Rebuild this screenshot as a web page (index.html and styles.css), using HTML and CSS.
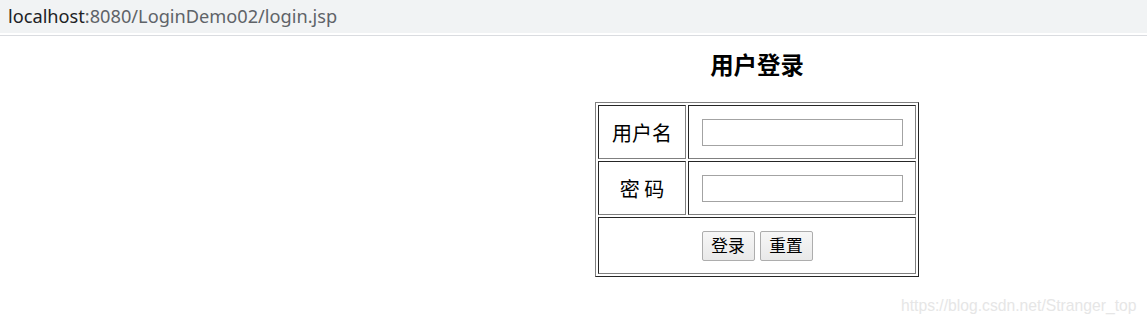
FILE: index.html
```html
<!DOCTYPE html>
<html lang="zh-CN">
<head>
<meta charset="utf-8">
<title>用户登录</title>
<link rel="stylesheet" href="styles.css">
</head>
<body>
<div class="urlbar"><span class="host">localhost</span><span class="path">:8080/LoginDemo02/login.jsp</span></div>
<div class="divider"></div>
<main class="page">
  <form class="login">
    <h3 class="title">用户登录</h3>
    <table class="login-table">
      <tr class="row">
        <td class="label">用户名</td>
        <td class="field"><input class="text-input" type="text"></td>
      </tr>
      <tr class="row">
        <td class="label">密 码</td>
        <td class="field"><input class="text-input" type="password"></td>
      </tr>
      <tr class="row-actions">
        <td class="actions" colspan="2"><button class="btn" type="button">登录</button><button class="btn" type="button">重置</button></td>
      </tr>
    </table>
  </form>
</main>
<div class="watermark">https://blog.csdn.net/Stranger_top</div>
</body>
</html>
```

FILE: styles.css
```css
html, body {
  margin: 0;
  padding: 0;
  background: #ffffff;
}

body {
  width: 1147px;
  height: 327px;
  overflow: hidden;
  position: relative;
  font-family: "Noto Sans CJK SC", "Noto Sans", sans-serif;
}

.urlbar {
  height: 33px;
  background: #f1f3f4;
  box-sizing: border-box;
  padding-left: 8px;
  font-family: "Noto Sans", "Noto Sans CJK SC", sans-serif;
  font-size: 18.2px;
  line-height: 32px;
}

.host {
  color: #202124;
}

.path {
  color: #5f6368;
}

.divider {
  height: 1px;
  margin-top: 2px;
  background: #dadce0;
}

.page {
  padding-left: 595px;
}

.login {
  width: 324px;
  margin: 0;
}

.title {
  margin: 0;
  padding-top: 13px;
  height: 53px;
  box-sizing: border-box;
  line-height: 30px;
  text-align: center;
  font-size: 23.4px;
  font-weight: bold;
  color: #000000;
  font-family: "Noto Sans CJK SC", sans-serif;
  padding-bottom: 0;
  margin-bottom: 13px;
}

.login-table {
  border-collapse: separate;
  border-spacing: 2px;
  border-style: solid;
  border-width: 1px;
  border-color: #808080 #262626 #262626 #808080;
  width: 324px;
  box-sizing: border-box;
}

.login-table td {
  border-style: solid;
  border-width: 1px;
  border-color: #262626 #808080 #808080 #262626;
  padding: 0;
  vertical-align: middle;
  box-sizing: border-box;
}

.row td {
  height: 54px;
}

.label {
  width: 88px;
  text-align: center;
  font-size: 20px;
  color: #000000;
}

.field {
  width: 228px;
  text-align: center;
}

.text-input {
  width: 201px;
  height: 27px;
  box-sizing: border-box;
  border: 1px solid #a3a3a3;
  background: #ffffff;
  margin: 0;
  padding: 0 3px;
  vertical-align: middle;
  outline: none;
}

.row-actions td {
  height: 57px;
}

.actions {
  text-align: center;
  font-size: 0;
}

.btn {
  width: 53px;
  height: 30px;
  box-sizing: border-box;
  margin: 0 2.5px;
  padding: 0;
  border: 1px solid #adadad;
  border-radius: 2px;
  background: linear-gradient(#f7f7f7, #e9e9e9);
  font-family: "Noto Sans CJK SC", sans-serif;
  font-size: 16.67px;
  color: #000000;
  vertical-align: middle;
  line-height: 25px;
}

.watermark {
  position: absolute;
  left: 901px;
  top: 297px;
  font-family: "Liberation Sans", Arial, sans-serif;
  font-size: 15.7px;
  color: #e6e6e6;
  white-space: nowrap;
}
```
